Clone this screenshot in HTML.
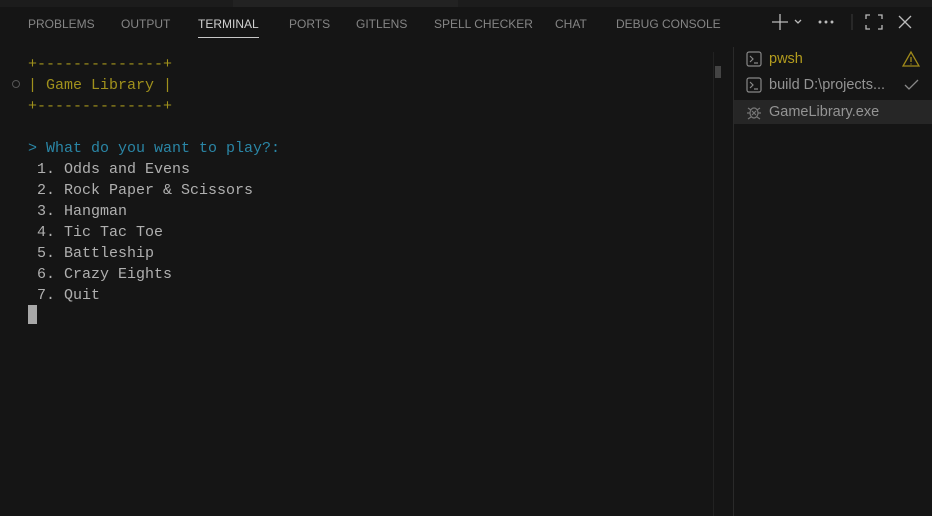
<!DOCTYPE html>
<html><head><style>
body{margin:0;width:932px;height:516px;background:#151515;overflow:hidden;font-family:"Liberation Sans",sans-serif;position:relative}
.top{position:absolute;left:0;top:0;width:932px;height:7px;background:#1c1c1c}
.top2{position:absolute;left:233px;top:0;width:225px;height:7px;background:#222}
.tabs{position:absolute;top:17px;left:28px;font-size:12px;color:#858585;white-space:nowrap}
.tabs span{position:absolute;top:0}
.act{color:#d0d0d0;border-bottom:1px solid #c8c8c8;padding-bottom:6px}
.term{position:absolute;left:28px;top:54px;font-family:"Liberation Mono",monospace;font-size:15px;line-height:21px;color:#b0b0b0;white-space:pre}
.y{color:#a0911c}.c{color:#2a86a6}
.cur{position:absolute;left:28px;top:305px;width:9px;height:19px;background:#a8a8a8}
.dot{position:absolute;left:12px;top:80px;width:6px;height:6px;border:1.5px solid #555;border-radius:50%}
.side{position:absolute;left:733px;top:47px;width:199px;height:469px;border-left:1px solid #2a2a2a}
.row{position:absolute;left:0;width:199px;height:24px;font-size:14.5px;line-height:24px;color:#949494}
.row span{position:absolute;left:35px}
.sel{background:#262626}
.sb{position:absolute;left:715px;top:66px;width:6px;height:12px;background:#444}
.sbl{position:absolute;left:713px;top:52px;width:1px;height:464px;background:#222}
</style></head><body>
<div class="top"></div><div class="top2"></div>
<div class="tabs">
<span style="left:0">PROBLEMS</span><span style="left:93px">OUTPUT</span><span class="act" style="left:170px">TERMINAL</span><span style="left:261px">PORTS</span><span style="left:328px">GITLENS</span><span style="left:406px">SPELL CHECKER</span><span style="left:527px">CHAT</span><span style="left:588px">DEBUG CONSOLE</span>
</div>
<svg style="position:absolute;left:768px;top:10px" width="150" height="24" fill="none" stroke="#bbb" stroke-width="1.3">
<path d="M12 4v16M4 12h16"/><path d="M27 10l3 3 3-3"/><circle cx="52" cy="12" r=".8" fill="#bbb"/><circle cx="58" cy="12" r=".8" fill="#bbb"/><circle cx="64" cy="12" r=".8" fill="#bbb"/>
<path d="M84 4v16" stroke="#333"/><path d="M98 9V5h4M110 5h4v4M114 15v4h-4M102 19h-4v-4"/><path d="M131 6l12 12M143 6l-12 12"/>
</svg>
<div class="dot"></div>
<div class="term"><span class="y">+--------------+
| Game Library |
+--------------+</span>

<span class="c">&gt; What do you want to play?:</span>
 1. Odds and Evens
 2. Rock Paper &amp; Scissors
 3. Hangman
 4. Tic Tac Toe
 5. Battleship
 6. Crazy Eights
 7. Quit</div>
<div class="cur"></div>
<div class="sbl"></div><div class="sb"></div>
<div class="side">
<div class="row" style="top:0"><svg style="position:absolute;left:12px;top:4px" width="16" height="16" fill="none" stroke="#888" stroke-width="1.2"><rect x="1" y="1" width="14" height="14" rx="2"/><path d="M4 5l3 3-3 3M8 12h4"/></svg><span style="color:#b39c1e">pwsh</span><svg style="position:absolute;left:168px;top:3px" width="18" height="17" fill="none" stroke="#a08a1a" stroke-width="1.3"><path d="M9 2L1 16h16z M9 7v5M9 13.5v1"/></svg></div>
<div class="row" style="top:26px"><svg style="position:absolute;left:12px;top:4px" width="16" height="16" fill="none" stroke="#888" stroke-width="1.2"><rect x="1" y="1" width="14" height="14" rx="2"/><path d="M4 5l3 3-3 3M8 12h4"/></svg><span>build D:\projects...</span><svg style="position:absolute;left:170px;top:5px" width="16" height="14" fill="none" stroke="#888" stroke-width="1.3"><path d="M1 7l4 4 9-9"/></svg></div>
<div class="row sel" style="top:53px"><svg style="position:absolute;left:12px;top:4px" width="16" height="16" fill="none" stroke="#777" stroke-width="1.2"><ellipse cx="8" cy="9" rx="4" ry="5"/><path d="M1 9h3M12 9h3M2 4l3 2M14 4l-3 2M2 15l3-2M14 15l-3-2M6 7l4 4M10 7l-4 4"/></svg><span style="color:#949494">GameLibrary.exe</span></div>
</div>
</body></html>
